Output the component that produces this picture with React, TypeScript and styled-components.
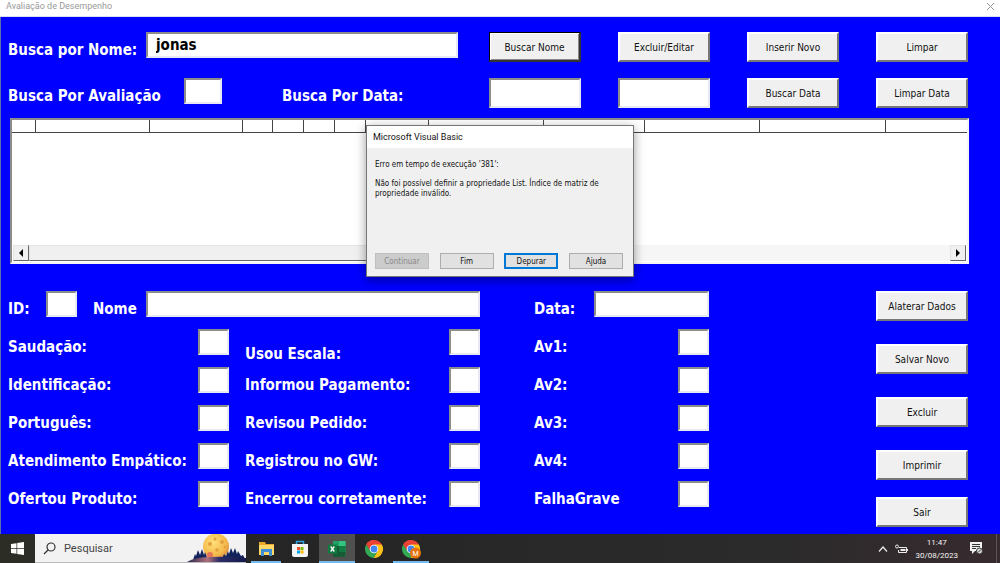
import React from "react";
import styled, { createGlobalStyle, css } from "styled-components";

const GlobalStyle = createGlobalStyle`
  * { box-sizing: border-box; }
  body { margin: 0; background: #00f; font-family: "DejaVu Sans Condensed", "DejaVu Sans", sans-serif; }
  button, input { font-family: inherit; margin: 0; }
`;

const Page = styled.div`
  display: flex;
  flex-direction: column;
  min-height: 100vh;
`;

const TitleBar = styled.header`
  display: flex;
  align-items: center;
  justify-content: space-between;
  height: 17px;
  padding: 0 5px 4px 6px;
  background: #fff;
  border-bottom: 1px solid #dcdcf4;
  color: #999;
  font: 9px/12px Roboto, sans-serif;
`;

const CloseButton = styled.button`
  display: flex;
  padding: 0;
  border: 0;
  background: none;
`;

const Form = styled.main`
  flex: 1;
  background: #00f;
  border-left: 1px solid #5b6fa8;
  padding: 15px 32px 7px 7px;
`;

const SearchRow = styled.div`
  display: grid;
  grid-template-columns: 1fr repeat(4, 92px);
  column-gap: 37px;
  height: 30px;
  margin-bottom: 16px;
`;

const SearchFields = styled.div`
  display: flex;
  align-items: flex-start;
  margin-right: -6px;
`;

const Label = styled.label<{ $width?: number; $drop?: boolean }>`
  flex: none;
  width: ${(p) => (p.$width ? `${p.$width}px` : "auto")};
  padding-top: ${(p) => (p.$drop ? 16 : 9)}px;
  color: #fff;
  font-size: 15px;
  line-height: 18px;
  font-weight: bold;
  white-space: nowrap;
`;

const DateLabel = styled(Label)`
  margin-left: 60px;
`;

const TextBox = styled.input<{ $width?: number; $tall?: boolean }>`
  ${(p) =>
    p.$width
      ? css`
          flex: none;
          width: ${p.$width}px;
        `
      : css`
          flex: 1;
          min-width: 0;
          width: 100%;
        `}
  height: ${(p) => (p.$tall ? 30 : 26)}px;
  padding: 0 8px;
  border: 2px solid;
  border-color: #8c8c8c #e8e8f4 #e8e8f4 #8c8c8c;
  border-radius: 0;
  outline: 0;
  background: #fff;
  color: #000;
  font-size: 15px;
  font-weight: bold;
`;

const PushButton = styled.button<{ $focused?: boolean }>`
  height: 30px;
  width: 92px;
  padding: 2px 0 0;
  border: 2px solid;
  border-color: #fff #777 #777 #fff;
  border-radius: 0;
  background: #f0f0f0;
  color: #111;
  font-size: 10px;
  line-height: 14px;
  white-space: nowrap;
  ${(p) =>
    p.$focused &&
    css`
      border-width: 1px 2px 2px 1px;
      border-color: #000 #333 #333 #000;
      box-shadow: inset 1px 1px #fff, inset -1px -1px #888;
    `}
`;

const ListArea = styled.section`
  position: relative;
  margin: -6px -32px 0 -8px;
  padding: 0 31px 0 10px;
`;

const ListBox = styled.div`
  display: flex;
  flex-direction: column;
  height: 146px;
  border: 2px solid;
  border-color: #8c8c8c #f4f4f4 #f4f4f4 #8c8c8c;
  background: #fff;
`;

const ListTable = styled.table`
  width: 100%;
  table-layout: fixed;
  border-collapse: collapse;
  th {
    height: 12px;
    padding: 0;
    border-bottom: 1px solid #444;
    border-right: 1px solid #444;
  }
  th:last-child { border-right: 0; }
`;

const ScrollBar = styled.div`
  display: flex;
  height: 16px;
  margin: auto 1px 1px;
  background: #f6f6f6;
`;

const ScrollButton = styled.button`
  display: flex;
  align-items: center;
  justify-content: center;
  width: 16px;
  padding: 0;
  border: 1px solid;
  border-color: #e4e4e4 #666 #666 #e4e4e4;
  background: #f0f0f0;
`;

const RightScrollButton = styled(ScrollButton)`
  margin-left: auto;
`;

const ScrollThumb = styled.div`
  width: 50%;
  border: 1px solid;
  border-color: #e4e4e4 #666 #666 #e4e4e4;
  background: #f0f0f0;
`;

const Dialog = styled.div`
  position: absolute;
  top: 7px;
  left: 50%;
  display: flex;
  flex-direction: column;
  width: 268px;
  height: 152px;
  transform: translateX(-50%);
  border: 1px solid #777;
  background: #f0f0f0;
  box-shadow: 0 3px 10px rgba(0, 0, 0, 0.4);
  color: #111;
  font-size: 8px;
  line-height: 10px;
`;

const DialogTitle = styled.h2`
  margin: 0;
  padding: 5px 6px;
  background: #fff;
  font: 9px/12px Roboto, sans-serif;
`;

const DialogText = styled.div`
  flex: 1;
  padding: 12px 28px 0 8px;
  p { margin: 0 0 9px; }
`;

const DialogButtons = styled.div`
  display: flex;
  justify-content: space-between;
  padding: 0 10px 7px 8px;
`;

const DialogButton = styled.button<{ $primary?: boolean }>`
  width: 54px;
  height: 16px;
  padding: 2px 0 0;
  border: ${(p) => (p.$primary ? "2px solid #0078d7" : "1px solid #adadad")};
  background: #e1e1e1;
  color: #111;
  font-size: 8px;
  line-height: 10px;
  &:disabled { background: #ccc; border-color: #bfbfbf; color: #888; }
`;

const Details = styled.div`
  display: flex;
  align-items: flex-start;
  justify-content: space-between;
  margin-top: 27px;
`;

const Fields = styled.div`
  flex: 1;
  display: grid;
  grid-template-columns: 472fr 175fr;
  column-gap: 54px;
  row-gap: 12px;
  margin-right: 167px;
`;

const FieldRow = styled.div`
  display: flex;
  align-items: flex-start;
  justify-content: space-between;
  height: 26px;
`;

const ScorePair = styled.div`
  display: grid;
  grid-template-columns: 221fr 235fr;
  column-gap: 16px;
`;

const Spacer = styled.span`
  flex: none;
  width: 16px;
`;

const Actions = styled.div`
  display: flex;
  flex-direction: column;
  gap: 23px;
  button:last-child { margin-top: -6px; }
`;

const Taskbar = styled.footer`
  display: flex;
  height: 29px;
  background: linear-gradient(90deg, #2c2e26, #252525 30%, #2a2b2a 75%, #372a2f);
  color: #f4f4f4;
  font-family: Roboto, sans-serif;
`;

const TaskButton = styled.button<{ $width?: number; $active?: boolean; $open?: boolean }>`
  display: flex;
  align-items: center;
  justify-content: center;
  width: ${(p) => p.$width ?? 30}px;
  padding: 0;
  border: 0;
  background: ${(p) => (p.$active ? "#50514f" : "transparent")};
  box-shadow: ${(p) => (p.$open ? "inset 0 -2px #76b9ed" : "none")};
`;

const SearchBox = styled.div`
  display: flex;
  align-items: center;
  width: 211px;
  padding-left: 8px;
  background: #f2f2f2;
  border-bottom: 1px solid #bbb;
  svg { flex: none; }
`;

const SearchInput = styled.input`
  flex: 1;
  min-width: 0;
  margin-left: 8px;
  padding: 2px 0 0;
  border: 0;
  background: none;
  outline: 0;
  font: 11px/16px Roboto, sans-serif;
  &::placeholder { color: #444; opacity: 1; }
`;

const Apps = styled.nav`
  display: flex;
  gap: 4px;
  padding-left: 5px;
`;

const Tray = styled.div`
  display: flex;
  align-items: center;
  gap: 7px;
  margin-left: auto;
  margin-right: 3px;
  padding-right: 13px;
  border-right: 1px solid #5c5356;
`;

const Clock = styled.time`
  margin-right: 5px;
  font-size: 8px;
  line-height: 13px;
  text-align: center;
`;

const listColumns = [23, 114, 93, 30, 31, 31, 31, 63, 115, 101, 115, 126];

const scoreRows = [
  ["Saudação:", "Usou Escala:", "Av1:"],
  ["Identificação:", "Informou Pagamento:", "Av2:"],
  ["Português:", "Revisou Pedido:", "Av3:"],
  ["Atendimento Empático:", "Registrou no GW:", "Av4:"],
  ["Ofertou Produto:", "Encerrou corretamente:", "FalhaGrave"],
];

function Score({ id, label, drop }: { id: string; label: string; drop?: boolean }) {
  return (
    <FieldRow>
      <Label htmlFor={id} $drop={drop}>{label}</Label>
      <TextBox id={id} $width={31} />
    </FieldRow>
  );
}

function WindowsLogo() {
  return (
    <svg width="13" height="13" viewBox="0 0 13 13" fill="#fff">
      <path d="M0 2l5.500-.8V6H0zM6.200 1L13 0v6H6.200zM0 6.700h5.500v5L0 11zM6.200 6.700H13V13l-6.800-1z" />
    </svg>
  );
}

function MoonScene() {
  return (
    <svg width="59" height="28" viewBox="0 0 59 28">
      <defs>
        <radialGradient id="moon" cx="0.4" cy="0.35" r="0.7">
          <stop offset="0" stopColor="#ffe07a" />
          <stop offset="0.7" stopColor="#f3b94a" />
          <stop offset="1" stopColor="#dd8a3e" />
        </radialGradient>
        <linearGradient id="hill" x1="0" x2="1">
          <stop offset="0" stopColor="#26264f" />
          <stop offset="0.35" stopColor="#b0707c" />
          <stop offset="0.55" stopColor="#2c2c66" />
          <stop offset="1" stopColor="#141b4d" />
        </linearGradient>
      </defs>
      <circle cx="29" cy="12.500" r="13" fill="url(#moon)" />
      <g fill="#e3a03c">
        <circle cx="28" cy="5" r="1.500" />
        <circle cx="35" cy="8" r="2" />
        <circle cx="23" cy="10" r="2" />
        <circle cx="30" cy="16" r="1.800" />
        <circle cx="38" cy="13" r="1.200" />
      </g>
      <circle cx="23" cy="21" r="3" fill="#e4735a" />
      <path
        d="M6 26l2-6 1 2 2-6 2 5 2-6 2 6 1-3 3 8zM35 25l2-5 2 2 2-5 1 3 2-6 2 5 2-5 2 6 1-3 3 5 2-1 2 4z"
        fill="#12235c"
      />
      <path d="M0 28q8-5 24-5 16-1 35 1v4z" fill="url(#hill)" />
    </svg>
  );
}

function Chrome({ badge }: { badge?: boolean }) {
  return (
    <svg width="20" height="20" viewBox="0 0 20 20">
      <path d="M10 10L2.200 5.500A9 9 0 0 1 17.800 5.500z" fill="#ea4335" />
      <path d="M10 10V1a9 9 0 0 0-7.800 4.500L6 12z" fill="#ea4335" />
      <path d="M17.800 5.500A9 9 0 0 1 9.500 19L13.600 12 10 5.500z" fill="#fbc116" />
      <path d="M2.200 5.500A9 9 0 0 0 9.500 19L13.600 12 10 14 6.300 12z" fill="#34a853" />
      <circle cx="10" cy="10" r="4.300" fill="#fff" />
      <circle cx="10" cy="10" r="3.400" fill="#4285f4" />
      {badge && (
        <>
          <circle cx="14.500" cy="14" r="5.500" fill="#e8710a" />
          <text x="14.500" y="16.500" fontSize="7" fontFamily="Roboto" fill="#fff" textAnchor="middle">M</text>
        </>
      )}
    </svg>
  );
}

export default function App() {
  return (
    <>
      <GlobalStyle />
      <Page>
        <TitleBar>
          Avaliação de Desempenho
          <CloseButton aria-label="Fechar">
            <svg width="9" height="9" viewBox="0 0 9 9" stroke="#999" fill="none">
              <path d="M1 1l7 7M8 1L1 8" />
            </svg>
          </CloseButton>
        </TitleBar>
        <Form>
          <SearchRow>
            <SearchFields>
              <Label htmlFor="busca-nome" $width={138}>Busca por Nome:</Label>
              <TextBox id="busca-nome" defaultValue="jonas" />
            </SearchFields>
            <PushButton $focused>Buscar Nome</PushButton>
            <PushButton>Excluir/Editar</PushButton>
            <PushButton>Inserir Novo</PushButton>
            <PushButton>Limpar</PushButton>
          </SearchRow>
          <SearchRow>
            <SearchFields>
              <Label htmlFor="busca-avaliacao" $width={176}>Busca Por Avaliação</Label>
              <TextBox id="busca-avaliacao" $width={38} />
              <DateLabel htmlFor="data-inicial">Busca Por Data:</DateLabel>
            </SearchFields>
            <TextBox id="data-inicial" $tall />
            <TextBox aria-label="Data final" $tall />
            <PushButton>Buscar Data</PushButton>
            <PushButton>Limpar Data</PushButton>
          </SearchRow>

          <ListArea>
            <ListBox>
              <ListTable aria-label="Resultados">
                <colgroup>
                  {listColumns.map((w, i) => <col key={i} width={w} />)}
                  <col />
                </colgroup>
                <thead>
                  <tr>
                    {listColumns.map((_, i) => <th key={i} />)}
                    <th />
                  </tr>
                </thead>
              </ListTable>
              <ScrollBar>
                <ScrollButton aria-label="Rolar para a esquerda">
                  <svg width="4" height="8" viewBox="0 0 4 8"><path d="M4 0v8L0 4z" /></svg>
                </ScrollButton>
                <ScrollThumb />
                <RightScrollButton aria-label="Rolar para a direita">
                  <svg width="4" height="8" viewBox="0 0 4 8"><path d="M0 0v8l4-4z" /></svg>
                </RightScrollButton>
              </ScrollBar>
            </ListBox>
            <Dialog role="dialog" aria-labelledby="erro-titulo">
              <DialogTitle id="erro-titulo">Microsoft Visual Basic</DialogTitle>
              <DialogText>
                <p>Erro em tempo de execução '381':</p>
                <p>Não foi possível definir a propriedade List. Índice de matriz de propriedade inválido.</p>
              </DialogText>
              <DialogButtons>
                <DialogButton disabled>Continuar</DialogButton>
                <DialogButton>Fim</DialogButton>
                <DialogButton $primary>Depurar</DialogButton>
                <DialogButton>Ajuda</DialogButton>
              </DialogButtons>
            </Dialog>
          </ListArea>

          <Details>
            <Fields>
              <FieldRow>
                <Label htmlFor="id" $width={38}>ID:</Label>
                <TextBox id="id" $width={31} />
                <Spacer />
                <Label htmlFor="nome" $width={53}>Nome</Label>
                <TextBox id="nome" />
              </FieldRow>
              <FieldRow>
                <Label htmlFor="data">Data:</Label>
                <TextBox id="data" $width={115} />
              </FieldRow>
              {scoreRows.map(([a, b, c], i) => (
                <React.Fragment key={a}>
                  <ScorePair>
                    <Score id={`a${i}`} label={a} />
                    <Score id={`b${i}`} label={b} drop={i === 0} />
                  </ScorePair>
                  <Score id={`c${i}`} label={c} />
                </React.Fragment>
              ))}
            </Fields>
            <Actions>
              <PushButton>Alaterar Dados</PushButton>
              <PushButton>Salvar Novo</PushButton>
              <PushButton>Excluir</PushButton>
              <PushButton>Imprimir</PushButton>
              <PushButton>Sair</PushButton>
            </Actions>
          </Details>
        </Form>

        <Taskbar>
          <TaskButton $width={35} aria-label="Iniciar"><WindowsLogo /></TaskButton>
          <SearchBox>
            <svg width="13" height="13" viewBox="0 0 13 13" fill="none" stroke="#333" strokeWidth="1.200">
              <circle cx="8" cy="5" r="4" />
              <path d="M5 8L1 12" />
            </svg>
            <SearchInput aria-label="Pesquisar" placeholder="Pesquisar" />
            <MoonScene />
          </SearchBox>
          <Apps>
            <TaskButton $open aria-label="Explorador de Arquivos">
              <svg width="17" height="16" viewBox="0 0 17 16">
                <path d="M1 1h6l1 2h8v11H1z" fill="#e8a92c" />
                <path d="M1 4h15v10H1z" fill="#ffd868" />
                <path d="M3 8h11v7h-3v-4H6v4H3z" fill="#3d8fd6" />
              </svg>
            </TaskButton>
            <TaskButton aria-label="Microsoft Store">
              <svg width="18" height="18" viewBox="0 0 18 18">
                <path d="M5.500 5V1.500h7V5" fill="none" stroke="#2fa3dd" strokeWidth="1.500" />
                <path d="M1 4h16v11q0 2-2 2H3q-2 0-2-2z" fill="#f4f4f4" />
                <path d="M6 7h3v3H6z" fill="#f25022" />
                <path d="M9.500 7h3v3h-3z" fill="#7fba00" />
                <path d="M6 10.500h3v3H6z" fill="#00a4ef" />
                <path d="M9.500 10.500h3v3h-3z" fill="#ffb900" />
              </svg>
            </TaskButton>
            <TaskButton $width={36} $active $open aria-label="Excel">
              <svg width="18" height="16" viewBox="0 0 18 16">
                <path d="M5 0h12.500v16H5z" fill="#21a366" />
                <path d="M11 0h6.500v5H11z" fill="#33c481" />
                <path d="M5 5h6v6H5zM5 11h12.500v5H5z" fill="#185c37" />
                <path d="M11 5h6.500v6H11z" fill="#107c41" />
                <path d="M0 3.500h9v9H0z" fill="#107c41" />
                <path d="M2.700 5.500l3.600 5M6.300 5.500l-3.600 5" stroke="#fff" strokeWidth="1.300" />
              </svg>
            </TaskButton>
            <TaskButton aria-label="Chrome"><Chrome /></TaskButton>
            <TaskButton $width={36} $open aria-label="Chrome, perfil M"><Chrome badge /></TaskButton>
          </Apps>
          <Tray>
            <svg width="10" height="6" viewBox="0 0 10 6" fill="none" stroke="#eee" strokeWidth="1.200">
              <path d="M1 5.500L5 1l4 4.500" />
            </svg>
            <svg width="13" height="10" viewBox="0 0 13 10" fill="none" stroke="#eee">
              <path d="M4 3.500h7.500v5h-8V6M12.500 5v2" />
              <path d="M5.500 5h5v2h-5z" fill="#eee" stroke="none" />
              <circle cx="2" cy="2.500" r="1.500" />
            </svg>
            <Clock>11:47<br />30/08/2023</Clock>
            <svg width="13" height="13" viewBox="0 0 13 13">
              <path d="M0 0h12v9H5l-3 3V9H0z" fill="#f2f2f2" />
              <path d="M2 2.500h8M2 4.500h8M2 6.500h4" stroke="#333" />
              <circle cx="9.500" cy="9" r="3" fill="#ddd" stroke="#333" />
              <path d="M8 10.500l3-3" stroke="#333" />
            </svg>
          </Tray>
        </Taskbar>
      </Page>
    </>
  );
}
